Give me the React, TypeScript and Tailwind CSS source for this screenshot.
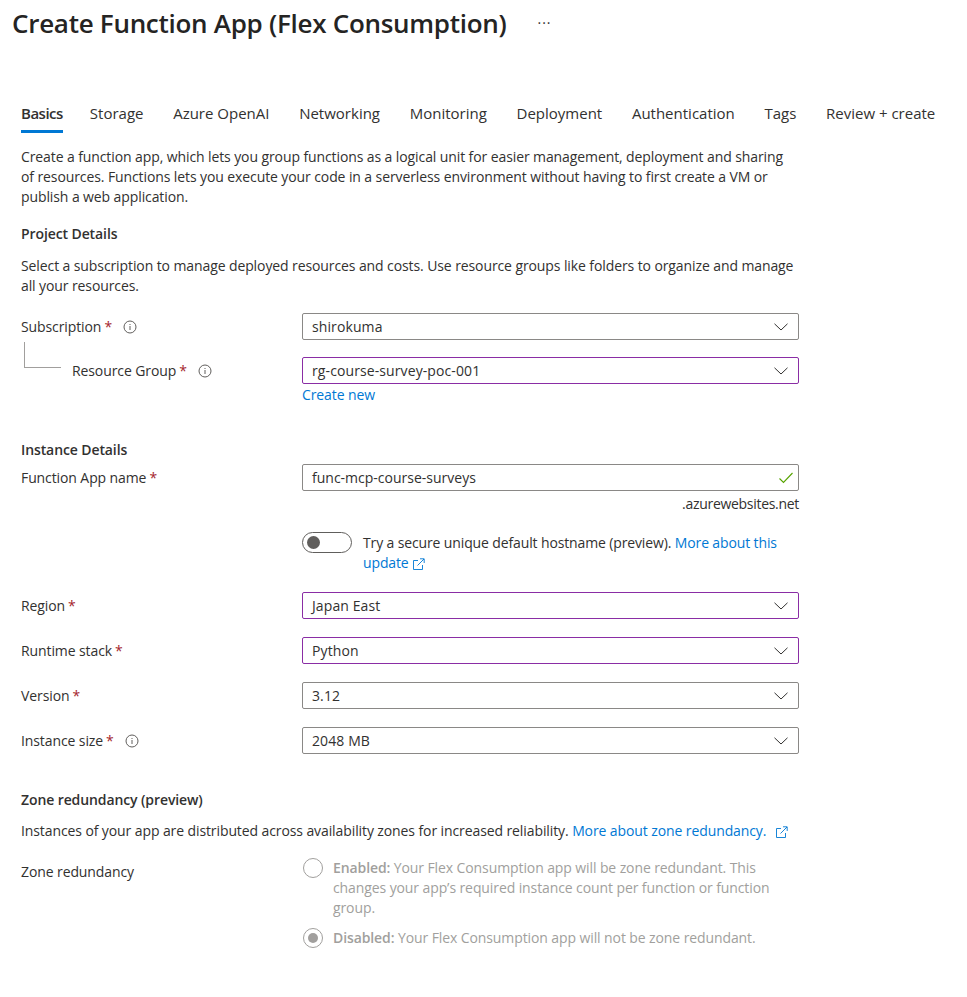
const FONT = "font-['Open_Sans','Noto_Sans',sans-serif]";

const tabs = ['Basics', 'Storage', 'Azure OpenAI', 'Networking', 'Monitoring', 'Deployment', 'Authentication', 'Tags', 'Review + create'];

function InfoIcon() {
  return (
    <svg width="14" height="14" viewBox="0 0 14 14" fill="none" className="shrink-0">
      <circle cx="7" cy="7" r="6" stroke="#605e5c" strokeWidth="1" />
      <path d="M7 6v4" stroke="#605e5c" strokeWidth="1" />
      <path d="M7 4v1" stroke="#605e5c" strokeWidth="1" />
    </svg>
  );
}

function ExternalIcon() {
  return (
    <svg width="13" height="13" viewBox="0 0 13 13" fill="none" className="inline-block">
      <path d="M6 2.5H1.5v9h9V7" stroke="#0078d4" strokeWidth="0.9" />
      <path d="M5.5 7.5 12 1M8 .8h4.2V5" stroke="#0078d4" strokeWidth="0.9" />
    </svg>
  );
}

function Chevron() {
  return (
    <svg width="14" height="8" viewBox="0 0 14 8" fill="none" className="shrink-0">
      <path d="M.5.8 7 7l6.5-6.2" stroke="#323130" strokeWidth="1" />
    </svg>
  );
}

function Label({ text, required = true, info = false }: { text: string; required?: boolean; info?: boolean }) {
  return (
    <div className="flex items-center">
      <span>{text}</span>
      {required && <span className="ml-[3px] text-[#a4262c]">*</span>}
      {info && (
        <span className="ml-[11px]">
          <InfoIcon />
        </span>
      )}
    </div>
  );
}

function Select({ value, dirty = false }: { value: string; dirty?: boolean }) {
  return (
    <div
      className={`flex h-[27px] w-[497px] items-center justify-between rounded-[2px] border pl-[9px] pr-[10px] ${
        dirty ? 'border-[#8a2da5]' : 'border-[#8a8886]'
      }`}
    >
      <span className="tracking-[0.1px]">{value}</span>
      <Chevron />
    </div>
  );
}

function Row({ label, children }: { label: React.ReactNode; children: React.ReactNode }) {
  return (
    <div className="flex items-center">
      <div className="w-[281px]">{label}</div>
      {children}
    </div>
  );
}

function Radio({ checked }: { checked: boolean }) {
  return (
    <div className="ml-[1px] flex h-[20px] w-[20px] shrink-0 items-center justify-center rounded-full border border-[#a19f9d]">
      {checked && <div className="h-[10px] w-[10px] rounded-full bg-[#a19f9d]" />}
    </div>
  );
}

export default function App() {
  return (
    <div className={`${FONT} min-h-[997px] w-[967px] bg-white text-[14px] leading-[20px] tracking-[-0.1px] text-[#323130]`}>
      <div className="flex items-center pl-3 pt-[6px]">
        <h1 className="text-[26px] leading-[34px] font-semibold tracking-[-0.28px] text-[#252423]">Create Function App (Flex Consumption)</h1>
        <span className="ml-[31px] text-[14px] tracking-[1px]">···</span>
      </div>

      <div className="mt-[63px] flex pl-[21px] text-[15px] tracking-[0px]">
        {tabs.map((t, i) => (
          <div
            key={t}
            className={
              i === 0
                ? 'mr-[27px] border-b-[3px] border-[#0078d4] pb-[7px] font-semibold tracking-[-0.5px]'
                : 'mr-[29.7px] pb-[10px]'
            }
          >
            {t}
          </div>
        ))}
      </div>

      <div className="px-[21px]">
        <p className="mt-[14px] w-[775px]">
          Create a function app, which lets you group functions as a logical unit for easier management, deployment and sharing of resources. Functions lets you execute your code in a serverless environment without having to first create a VM or publish a web application.
        </p>

        <h2 className="mt-[17px] font-semibold">Project Details</h2>
        <p className="mt-[12px] w-[775px]">
          Select a subscription to manage deployed resources and costs. Use resource groups like folders to organize and manage all your resources.
        </p>

        <div className="mt-[17px] flex flex-col gap-[17px]">
          <Row label={<Label text="Subscription" info />}>
            <Select value="shirokuma" />
          </Row>
          <Row
            label={
              <div className="relative pl-[51px]">
                <div className="absolute -top-[19px] left-[3px] h-[26px] w-[37px] border-b border-l border-[#a19f9d]" />
                <Label text="Resource Group" info />
              </div>
            }
          >
            <Select value="rg-course-survey-poc-001" dirty />
          </Row>
        </div>
        <a className="ml-[281px] mt-[1px] block text-[#0078d4]">Create new</a>

        <h2 className="mt-[35px] font-semibold">Instance Details</h2>
        <div className="mt-[4px]">
          <Row label={<div className="pt-[1px]"><Label text="Function App name" /></div>}>
            <div className="flex h-[27px] w-[497px] items-center justify-between rounded-[2px] border border-[#8a8886] pl-[9px] pr-[4px]">
              <span className="tracking-[0px]">func-mcp-course-surveys</span>
              <svg width="16" height="12" viewBox="0 0 16 12" fill="none">
                <path d="M1.5 6.5 5.5 10.5 14.5 1" stroke="#57a300" strokeWidth="1.1" />
              </svg>
            </div>
          </Row>
        </div>
        <div className="ml-[281px] mt-[3px] w-[497px] text-right tracking-[-0.3px]">.azurewebsites.net</div>

        <div className="ml-[281px] mt-[19px] flex">
          <div className="-mt-[1px] flex h-[21px] w-[50px] shrink-0 items-center rounded-full border border-[#605e5c] pl-[4px]">
            <div className="h-[13px] w-[13px] rounded-full bg-[#605e5c]" />
          </div>
          <p className="ml-[11px] w-[430px] tracking-[-0.13px]">
            Try a secure unique default hostname (preview). <a className="text-[#0078d4]">More about this update</a>{' '}
            <ExternalIcon />
          </p>
        </div>

        <div className="mt-[19px] flex flex-col gap-[18px]">
          <Row label={<Label text="Region" />}>
            <Select value="Japan East" dirty />
          </Row>
          <Row label={<Label text="Runtime stack" />}>
            <Select value="Python" dirty />
          </Row>
          <Row label={<Label text="Version" />}>
            <Select value="3.12" />
          </Row>
          <Row label={<Label text="Instance size" info />}>
            <Select value="2048 MB" />
          </Row>
        </div>

        <h2 className="mt-[36px] font-semibold">Zone redundancy (preview)</h2>
        <p className="mt-[11px] whitespace-nowrap">
          Instances of your app are distributed across availability zones for increased reliability.{' '}
          <a className="text-[#0078d4]">More about zone redundancy.</a>
          <span className="ml-[9px]">
            <ExternalIcon />
          </span>
        </p>

        <div className="mt-[17px] flex">
          <div className="w-[281px] pt-[4px]">Zone redundancy</div>
          <div className="flex flex-col gap-[10px] text-[#a19f9d]">
            <div className="flex">
              <Radio checked={false} />
              <p className="ml-[10px] w-[445px]">
                <span className="font-semibold">Enabled:</span> Your Flex Consumption app will be zone redundant. This changes your app’s required instance count per function or function group.
              </p>
            </div>
            <div className="flex">
              <Radio checked />
              <p className="ml-[10px] w-[445px]">
                <span className="font-semibold">Disabled:</span> Your Flex Consumption app will not be zone redundant.
              </p>
            </div>
          </div>
        </div>
      </div>
    </div>
  );
}
